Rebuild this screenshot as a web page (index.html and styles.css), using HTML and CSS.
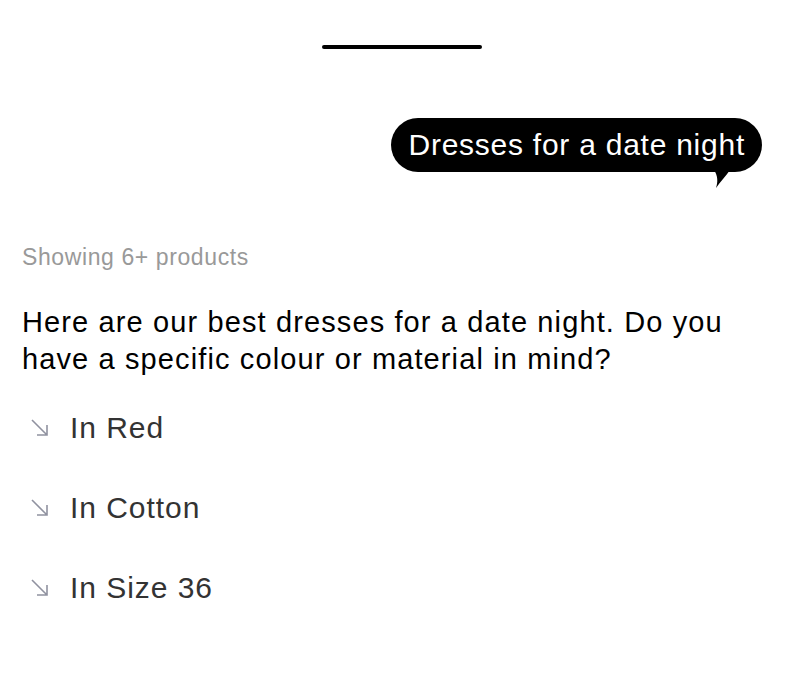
FILE: index.html
```html
<!DOCTYPE html>
<html>
<head>
<meta charset="utf-8">
<link rel="stylesheet" href="styles.css">
</head>
<body>
<div class="sheet">
  <div class="handle"></div>
  <div class="user-row">
    <div class="bubble">Dresses for a date night
      <svg class="tail" width="16" height="18" viewBox="0 0 16 18"><path d="M0 0 H16 C12 6 6 12 2 18 C4 12 4 6 0 0 Z" fill="#000"/></svg>
    </div>
  </div>
  <div class="meta">Showing 6+ products</div>
  <p class="answer">Here are our best dresses for a date night. Do you have a specific colour or material in mind?</p>
  <ul class="suggestions">
    <li class="suggestion"><svg class="arrow" width="20" height="20" viewBox="0 0 20 20"><path d="M2 2 L17 17 M17 7 V17 H7" fill="none" stroke="#9092a0" stroke-width="1.6"/></svg><span>In Red</span></li>
    <li class="suggestion"><svg class="arrow" width="20" height="20" viewBox="0 0 20 20"><path d="M2 2 L17 17 M17 7 V17 H7" fill="none" stroke="#9092a0" stroke-width="1.6"/></svg><span>In Cotton</span></li>
    <li class="suggestion"><svg class="arrow" width="20" height="20" viewBox="0 0 20 20"><path d="M2 2 L17 17 M17 7 V17 H7" fill="none" stroke="#9092a0" stroke-width="1.6"/></svg><span>In Size 36</span></li>
  </ul>
</div>
</body>
</html>
```
FILE: styles.css
```css
* { box-sizing: border-box; }
html, body { margin: 0; padding: 0; background: #fff; }
body { font-family: "Liberation Sans", Arial, sans-serif; color: #000; }
.sheet { display: flex; flex-direction: column; padding: 45px 42px 0 22px; }
.handle { align-self: center; width: 160px; height: 4px; border-radius: 2px; background: #000; margin-left: 20px; }
.user-row { display: flex; justify-content: flex-end; margin-top: 69px; }
.bubble { position: relative; background: #000; color: #fff; font-size: 30px; letter-spacing: 0.75px; height: 54px; line-height: 54px; padding: 0 17px; border-radius: 27px; }
.tail { position: absolute; right: 32px; bottom: -16px; }
.meta { margin-top: 72px; font-size: 23px; letter-spacing: 0.6px; line-height: 26px; color: #999; }
.answer { margin: 34px 0 0; font-size: 29px; letter-spacing: 1.12px; line-height: 37px; max-width: 730px; }
.suggestions { list-style: none; margin: 32px 0 0; padding: 0; display: flex; flex-direction: column; gap: 44px; }
.suggestion { display: flex; align-items: center; gap: 20px; font-size: 30px; letter-spacing: 0.95px; line-height: 36px; color: #333; padding-left: 8px; }
.arrow { flex: none; }
```
